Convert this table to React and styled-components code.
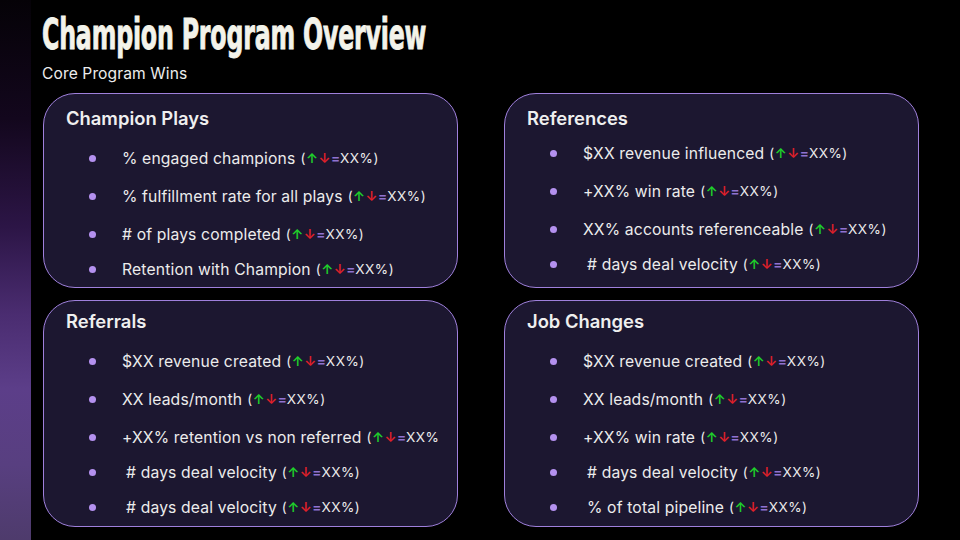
import React from 'react'
import styled, { createGlobalStyle } from 'styled-components'

const GlobalStyle = createGlobalStyle`
    html, body {
        margin: 0;
        padding: 0;
        background: #000;
    }
    * { box-sizing: border-box; }
`

const Slide = styled.div`
    width: 960px;
    height: 540px;
    display: flex;
    background: #000;
    overflow: hidden;
    font-family: Inter, "Noto Sans", sans-serif;
`
const SideStrip = styled.div`
    width: 31px;
    flex-shrink: 0;
    background: linear-gradient(
        180deg,
        #050207 0%,
        #13071d 22%,
        #2c1546 42%,
        #4a2c70 58%,
        #5c3e89 72%,
        #583f80 86%,
        #4e3b6c 100%
    );
`
const Main = styled.div`
    flex: 1;
    padding: 11px 0 0 11px;
    display: flex;
    flex-direction: column;
`
const Title = styled.h1`
    margin: 0;
    height: 46px;
    font-family: "DejaVu Sans Condensed", "DejaVu Sans", sans-serif;
    font-stretch: condensed;
    font-weight: 700;
    font-size: 43px;
    line-height: 46px;
    color: #f3f3ea;
    white-space: nowrap;
    transform: scaleX(0.612);
    transform-origin: left center;
    letter-spacing: -0.3px;
    -webkit-text-stroke: 0.9px #f3f3ea;
`
const Subtitle = styled.div`
    margin-top: 7px;
    font-size: 15.6px;
    line-height: 20px;
    color: #ececec;
    letter-spacing: 0.1px;
`
const Grid = styled.div`
    margin-top: 9px;
    margin-left: 1px;
    display: grid;
    grid-template-columns: 415px 415px;
    grid-template-rows: 195px 227px;
    column-gap: 46px;
    row-gap: 12px;
`
const Card = styled.div`
    border: 1px solid #9f80dc;
    border-radius: 32px;
    background: #1c1730;
    padding: ${p => p.$top}px 0 0 22px;
    overflow: hidden;
`
const CardTitle = styled.div`
    font-size: 18.4px;
    font-weight: 600;
    line-height: 22px;
    color: #efefef;
`
const List = styled.ul`
    list-style: none;
    margin: ${p => p.$gap}px 0 0 0;
    padding: 0;
`
const Item = styled.li`
    position: relative;
    display: flex;
    align-items: center;
    height: 20px;
    padding-left: ${p => 56 + (p.$indent ? 4 : 0)}px;
    margin-top: ${p => p.$space}px;
    font-size: 15.7px;
    color: #ececec;
    white-space: nowrap;
    letter-spacing: 0.15px;
    &:first-child { margin-top: 0; }
    &::before {
        content: '';
        position: absolute;
        left: 23px;
        top: 7px;
        width: 7px;
        height: 7px;
        border-radius: 50%;
        background: #b491ef;
    }
`
const Metric = styled.span`
    font-size: 13.6px;
    letter-spacing: 0.5px;
    margin-left: 5px;
    color: #ececec;
`
const Up = styled.span`color: #1fd02a; font-weight: 600;`
const Down = styled.span`color: #e0202a; font-weight: 600;`
const Eq = styled.span`color: #9073d0; font-weight: 600; letter-spacing: 0;`

const MetricTag = ({ open = true }) => (
    <Metric>
        (<Up>↑</Up><Down>↓</Down><Eq>=</Eq>XX%{open ? ')' : ''}
    </Metric>
)

const cards = [
    {
        title: 'Champion Plays',
        top: 13,
        gap: 19,
        items: [
            { text: '% engaged champions' },
            { text: '% fulfillment rate for all plays' },
            { text: '# of plays completed' },
            { text: 'Retention with Champion' },
        ],
    },
    {
        title: 'References',
        top: 13,
        gap: 14,
        items: [
            { text: '$XX revenue influenced' },
            { text: '+XX% win rate' },
            { text: 'XX% accounts referenceable' },
            { text: '# days deal velocity', indent: true },
        ],
    },
    {
        title: 'Referrals',
        top: 9,
        gap: 19,
        items: [
            { text: '$XX revenue created' },
            { text: 'XX leads/month' },
            { text: '+XX% retention vs non referred', cut: true },
            { text: '# days deal velocity', indent: true },
            { text: '# days deal velocity', indent: true },
        ],
    },
    {
        title: 'Job Changes',
        top: 9,
        gap: 19,
        items: [
            { text: '$XX revenue created' },
            { text: 'XX leads/month' },
            { text: '+XX% win rate' },
            { text: '# days deal velocity', indent: true },
            { text: '% of total pipeline', indent: true },
        ],
    },
]

const spacing = i => (i < 3 ? 18 : 15)

const StatCard = ({ card }) => (
    <Card $top={card.top}>
        <CardTitle>{card.title}</CardTitle>
        <List $gap={card.gap}>
            {card.items.map((item, i) => (
                <Item key={i} $space={spacing(i)} $indent={item.indent}>
                    {item.text}
                    <MetricTag open={!item.cut} />
                </Item>
            ))}
        </List>
    </Card>
)

const App = () => (
    <>
        <GlobalStyle />
        <Slide>
            <SideStrip />
            <Main>
                <Title>Champion Program Overview</Title>
                <Subtitle>Core Program Wins</Subtitle>
                <Grid>
                    <StatCard card={cards[0]} />
                    <StatCard card={cards[1]} />
                    <StatCard card={cards[2]} />
                    <StatCard card={cards[3]} />
                </Grid>
            </Main>
        </Slide>
    </>
)

export default App
